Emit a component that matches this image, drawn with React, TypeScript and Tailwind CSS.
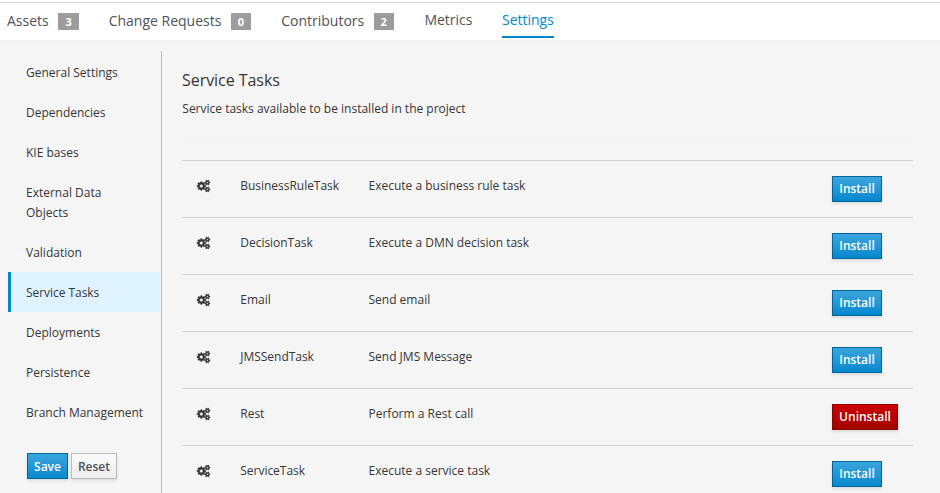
const tabs = [
  { label: 'Assets', count: 3, style: 'w-[101.7px]', badge: 'w-[21px]' },
  { label: 'Change Requests', count: 0, style: 'w-[172.5px]', badge: 'w-5' },
  { label: 'Contributors', count: 2, style: 'w-[143.2px]', badge: 'w-5' },
];

const sections = [
  'General Settings',
  'Dependencies',
  'KIE bases',
  'External Data Objects',
  'Validation',
  'Service Tasks',
  'Deployments',
  'Persistence',
  'Branch Management',
];

const tasks = [
  { name: 'BusinessRuleTask', text: 'Execute a business rule task', installed: false },
  { name: 'DecisionTask', text: 'Execute a DMN decision task', installed: false },
  { name: 'Email', text: 'Send email', installed: false },
  { name: 'JMSSendTask', text: 'Send JMS Message', installed: false },
  { name: 'Rest', text: 'Perform a Rest call', installed: true },
  { name: 'ServiceTask', text: 'Execute a service task', installed: false },
];

const variants = {
  primary: 'border-[#00659c] bg-linear-to-b from-[#39a5dc] to-[#0088ce] text-white',
  danger: 'border-[#8b0000] bg-linear-to-b from-[#cc0000] to-[#a30000] text-white',
  normal: 'border-[#bbbbbb] bg-linear-to-b from-[#fafafa] to-[#ededed] text-[#4d5258]',
};

function Button({ label, variant, style }: { label: string; variant: keyof typeof variants; style: string }) {
  return (
    <button
      className={`h-[26px] shrink-0 border text-center text-[12px] font-semibold whitespace-nowrap shadow-[0_2px_3px_rgba(3,3,3,0.1)] ${variants[variant]} ${style}`}
    >
      {label}
    </button>
  );
}

const smallGear =
  'v140q0 16-149 31-12 27-30 52 51 113 51 138 0 4-4 7-122 71-124 71-8 0-46-47t-52-68q-20 2-30 2t-30-2q-14 21-52 68t-46 47q-2 0-124-71-4-3-4-7 0-25 51-138-18-25-30-52-149-15-149-31v-140q0-16 149-31 13-29 30-52-51-113-51-138 0-4 4-7 4-2 35-20t59-34 30-16q8 0 46 46.500t52 67.500q20-2 30-2t30 2q51-71 92-112l6-2q4 0 124 70 4 3 4 7 0 25-51 138 17 23 30 52 149 15 149 31z';

const gears =
  'M896 896q0-106-75-181t-181-75-181 75-75 181 75 181 181 75 181-75 75-181zm768 512q0-52-38-90t-90-38-90 38-38 90q0 53 37.500 90.500t90.500 37.500 90.500-37.500 37.500-90.500zm0-1024q0-52-38-90t-90-38-90 38-38 90q0 53 37.500 90.500t90.500 37.500 90.500-37.500 37.500-90.500zm-384 421v185q0 10-7 19.500t-16 10.500l-155 24q-11 35-32 76 34 48 90 115 7 11 7 20 0 12-7 19-23 30-82.500 89.500t-78.500 59.500q-11 0-21-7l-115-90q-37 19-77 31-11 108-23 155-7 24-30 24h-186q-11 0-20-7.500t-10-17.500l-23-153q-34-10-75-31l-118 89q-7 7-20 7-11 0-21-8-144-133-144-160 0-9 7-19 10-14 41-53t47-61q-23-44-35-82l-152-24q-10-1-17-9.500t-7-19.500v-185q0-10 7-19.500t16-10.500l155-24q11-35 32-76-34-48-90-115-7-11-7-20 0-12 7-20 22-30 82-89t79-59q11 0 21 7l115 90q34-18 77-32 11-108 23-154 7-24 30-24h186q11 0 20 7.500t10 17.500l23 153q34 10 75 31l118-89q8-7 20-7 11 0 21 8 144 133 144 160 0 8-7 19-12 16-42 54t-45 60q23 48 34 82l152 23q10 2 17 10.500t7 19.500z';

function Cogs() {
  return (
    <svg
      className="block h-3 w-[13px] overflow-visible"
      viewBox="0 0 1920 1792"
      fill="currentColor"
      stroke="currentColor"
      strokeWidth="80"
    >
      <path d={`${gears}M1920 1338${smallGear}M1920 314${smallGear}`} />
    </svg>
  );
}

export default function App() {
  return (
    <div className="flex h-[493px] w-[940px] flex-col overflow-hidden bg-[#f5f5f5] font-['Open_Sans',sans-serif] text-[12px] leading-5 text-[#363636]">
      <header className="h-[41px] shrink-0 border-b border-[#ededed] bg-white pt-[2px]">
        <nav className="flex h-[38px] items-start border-t border-[#d1d1d1] pl-[7px] text-[14px] text-[#4d5258]">
          {tabs.map((tab) => (
            <a key={tab.label} className={`flex shrink-0 pt-2 whitespace-nowrap ${tab.style}`}>
              {tab.label}
              <span
                className={`mt-[2px] ml-[9.5px] h-[17px] bg-[#9c9c9c] text-center text-[11px] leading-[17px] font-bold text-white ${tab.badge}`}
              >
                {tab.count}
              </span>
            </a>
          ))}
          <a className="w-[77.6px] shrink-0 pt-[7px]">Metrics</a>
          <a className="h-[35px] w-[52px] border-b-2 border-[#0088ce] pt-[7px] text-[#0088ce]">Settings</a>
        </nav>
      </header>

      <div className="flex min-h-0 flex-1 pt-[10px]">
        <aside className="w-[162px] shrink-0 border-r border-[#bbbbbb] pt-[1px] pr-[1px] pl-2">
          <ul>
            {sections.map((section) => (
              <li
                key={section}
                className={`border-l-[3px] pt-[11px] pb-[9px] pl-[15px] ${
                  section === 'Service Tasks'
                    ? 'border-[#0088ce] bg-[#def3ff] tracking-[-0.05px]'
                    : 'border-transparent'
                } ${section === 'Branch Management' ? 'whitespace-nowrap' : 'pr-5'}`}
              >
                {section}
              </li>
            ))}
          </ul>
          <div className="mt-[21px] ml-[19px] flex gap-[3px]">
            <Button label="Save" variant="primary" style="w-[41px] leading-[26px]" />
            <Button label="Reset" variant="normal" style="w-[46px] leading-[26px]" />
          </div>
        </aside>

        <main className="w-[751px] pl-5">
          <h1 className="pt-[19px] text-[16px] leading-5 tracking-[-0.05px]">Service Tasks</h1>
          <p className="mt-[9px] h-[41px] border-b border-[#f0f0f0] pl-[0.3px]">
            Service tasks available to be installed in the project
          </p>
          <div className="mt-5">
            {tasks.map((task) => (
              <div key={task.name} className="flex h-[57px] items-start border-t border-[#d1d1d1] pt-[15px]">
                <div className="w-[58.3px] shrink-0 pt-1 pl-[15px]">
                  <Cogs />
                </div>
                <div className="w-[128.2px] shrink-0 tracking-[-0.03px]">{task.name}</div>
                <div className="w-[463.5px] shrink-0">{task.text}</div>
                {task.installed ? (
                  <Button label="Uninstall" variant="danger" style="w-[66px] leading-[24px]" />
                ) : (
                  <Button label="Install" variant="primary" style="w-[50px] leading-[24px]" />
                )}
              </div>
            ))}
          </div>
        </main>
      </div>
    </div>
  );
}
